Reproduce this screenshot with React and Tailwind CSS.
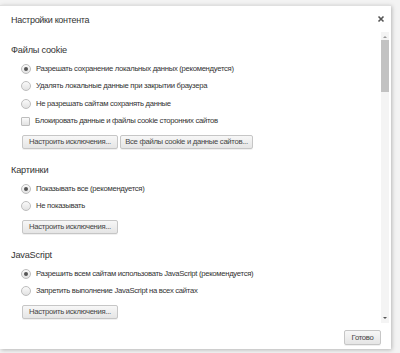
import React from 'react';

const Radio = ({ checked }) => (
  <span className='w-[10px] h-[10px] rounded-full border border-[#bdbdbd] bg-gradient-to-b from-[#fafafa] to-[#e2e2e2] flex items-center justify-center shrink-0'>
    {checked && <span className='w-[4px] h-[4px] rounded-full bg-[#555]' />}
  </span>
);

const Check = () => (
  <span className='w-[9px] h-[9px] rounded-[1px] border border-[#bdbdbd] bg-gradient-to-b from-[#fafafa] to-[#e2e2e2] shrink-0' />
);

const Option = ({ type = 'radio', checked, children }) => (
  <div className='flex items-center gap-[5px] h-[17.5px] pl-[10px]'>
    {type === 'radio' ? <Radio checked={checked} /> : <Check />}
    <span className='text-[7.7px] tracking-[-0.3px] text-[#333] whitespace-nowrap'>{children}</span>
  </div>
);

const Btn = ({ children, w }) => (
  <button className={`h-[14px] ${w} border border-[#c6c6c6] rounded-[2px] bg-gradient-to-b from-[#f7f7f7] to-[#e5e5e5] text-[7.7px] tracking-[-0.3px] text-[#444] shadow-[0_1px_0_rgba(0,0,0,0.06)] flex items-center justify-center whitespace-nowrap`}>
    {children}
  </button>
);

const Section = ({ title, children }) => (
  <div className='pb-[15px]'>
    <div className='text-[9.2px] tracking-[-0.2px] text-[#333] h-[12px] leading-[12px] mb-[4px]'>{title}</div>
    {children}
  </div>
);

export default function App() {
  return (
    <div className='w-[400px] h-[353px] bg-[#f3f3f3] pt-[5px]' style={{ fontFamily: '"Liberation Sans", Arial, sans-serif' }}>
      <div className='w-[391px] h-[344px] bg-white border-t border-[#e0e0e0] shadow-[1px_1px_4px_rgba(0,0,0,0.25)] flex flex-col'>
        <div className='flex items-start justify-between h-[27px] pl-[11px] pr-[6px] pt-[8px]'>
          <span className='text-[9px] tracking-[-0.3px] text-[#333] leading-[12px]'>Настройки контента</span>
          <svg width='8' height='8' viewBox='0 0 8 8' className='mt-[1px]'><path d='M1.5 1.5 L6.5 6.5 M6.5 1.5 L1.5 6.5' stroke='#555' strokeWidth='1.6' /></svg>
        </div>
        <div className='flex flex-1 min-h-0'>
          <div className='flex-1 pl-[11px] pt-[11px] overflow-hidden'>
            <Section title='Файлы cookie'>
              <Option checked>Разрешать сохранение локальных данных (рекомендуется)</Option>
              <Option>Удалять локальные данные при закрытии браузера</Option>
              <Option>Не разрешать сайтам сохранять данные</Option>
              <Option type='check'>Блокировать данные и файлы cookie сторонних сайтов</Option>
              <div className='flex gap-[2px] pl-[11px] mt-[5px]'>
                <Btn w='w-[96px]'>Настроить исключения...</Btn>
                <Btn w='w-[133px]'>Все файлы cookie и данные сайтов...</Btn>
              </div>
            </Section>
            <Section title='Картинки'>
              <Option checked>Показывать все (рекомендуется)</Option>
              <Option>Не показывать</Option>
              <div className='flex pl-[11px] mt-[5px]'>
                <Btn w='w-[96px]'>Настроить исключения...</Btn>
              </div>
            </Section>
            <Section title='JavaScript'>
              <Option checked>Разрешить всем сайтам использовать JavaScript (рекомендуется)</Option>
              <Option>Запретить выполнение JavaScript на всех сайтах</Option>
              <div className='flex pl-[11px] mt-[5px]'>
                <Btn w='w-[96px]'>Настроить исключения...</Btn>
              </div>
            </Section>
          </div>
          <div className='w-[8px] mr-[2px] bg-[#f4f4f4] flex flex-col items-center h-[291px] -mt-[1px]'>
            <svg width='6' height='7' viewBox='0 0 6 7' className='mt-[1px]'><path d='M1 5 L3 3 L5 5 Z' fill='#9a9a9a' /></svg>
            <div className='w-[8px] h-[52px] bg-[#c2c2c2]' />
            <div className='flex-1' />
            <svg width='6' height='7' viewBox='0 0 6 7' className='mb-[2px]'><path d='M1 3 L3 5 L5 3 Z' fill='#555' /></svg>
          </div>
        </div>
        <div className='flex justify-end pr-[10px] pb-[4px] pt-[2px]'>
          <Btn w='w-[37px] h-[15px]'>Готово</Btn>
        </div>
      </div>
    </div>
  );
}
